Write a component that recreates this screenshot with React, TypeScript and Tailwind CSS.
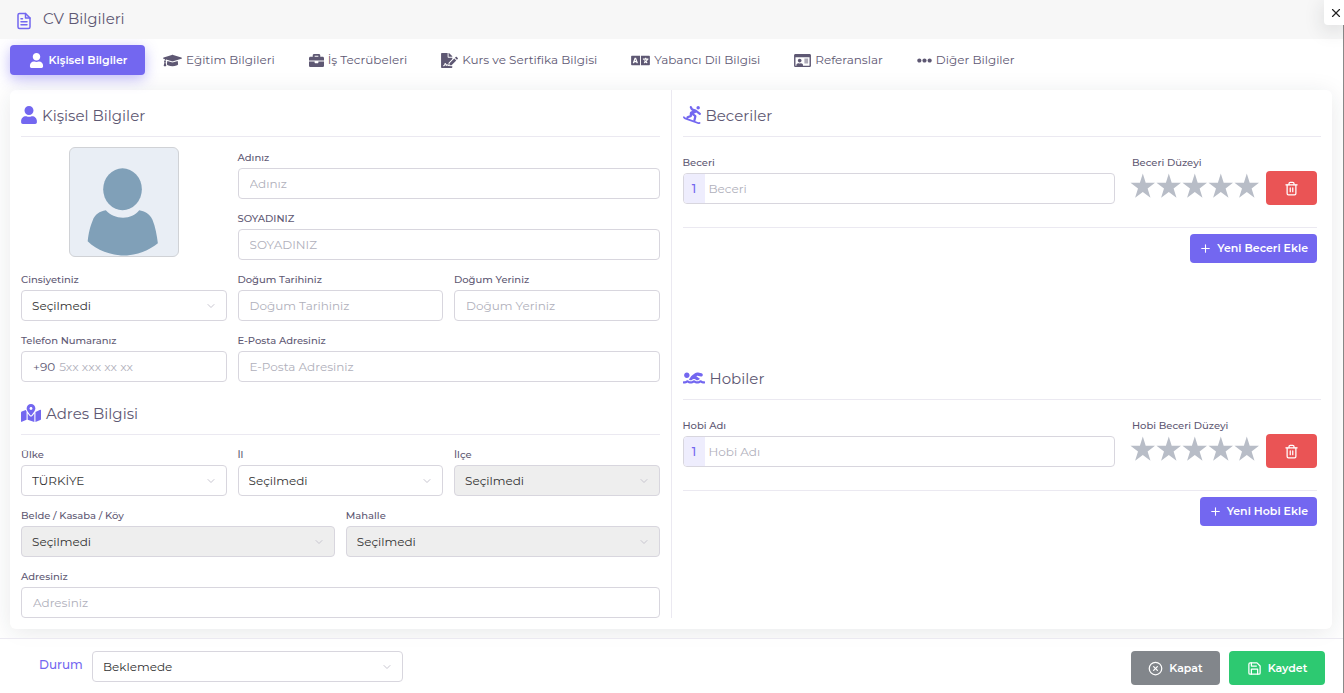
import { useId } from "react";
import type { ReactNode } from "react";
import {
  FaBriefcase,
  FaEllipsisH,
  FaFileSignature,
  FaGraduationCap,
  FaLanguage,
  FaMapMarkedAlt,
  FaRegIdCard,
  FaSnowboarding,
  FaSwimmer,
  FaUser,
} from "react-icons/fa";
import { FiChevronDown, FiFileText, FiPlus, FiSave, FiTrash2, FiX, FiXCircle } from "react-icons/fi";

const control =
  "h-[31px] w-full rounded-[4px] border border-[#d8d6de] bg-white text-xs outline-none";

function Label({ id, children }: { id: string; children: ReactNode }) {
  return (
    <label htmlFor={id} className="block h-5 text-[10px] leading-5 font-medium text-[#5e5873]">
      {children}
    </label>
  );
}

function TextField({ label, className = "" }: { label: string; className?: string }) {
  const id = useId();
  return (
    <div className={className}>
      <Label id={id}>{label}</Label>
      <input
        id={id}
        type="text"
        placeholder={label}
        className={`${control} block px-[11px] text-[#6e6b7b] placeholder:text-[#b0b0bb]`}
      />
    </div>
  );
}

function Dropdown({ id, value, disabled = false }: { id: string; value: string; disabled?: boolean }) {
  return (
    <div className="relative w-full">
      <select
        id={id}
        disabled={disabled}
        className={`${control} block appearance-none px-[10px] pt-px text-[#333333] disabled:bg-[#eeeeee] disabled:opacity-100`}
      >
        <option>{value}</option>
      </select>
      <FiChevronDown className="pointer-events-none absolute top-[10px] right-[10px] size-3 text-[#c8c6d0]" />
    </div>
  );
}

function SelectField({
  label,
  value,
  disabled,
  className = "",
}: {
  label: string;
  value: string;
  disabled?: boolean;
  className?: string;
}) {
  const id = useId();
  return (
    <div className={className}>
      <Label id={id}>{label}</Label>
      <Dropdown id={id} value={value} disabled={disabled} />
    </div>
  );
}

function Heading({ icon, children }: { icon: ReactNode; children: ReactNode }) {
  return (
    <h2 className="flex h-[47px] items-center gap-[5px] border-b border-[#ebe9f1] pt-[6px] text-[15px] text-[#5e5873]">
      <span className="-mt-[3px] text-[#7367f0]">{icon}</span>
      {children}
    </h2>
  );
}

const tabs = [
  { label: "Eğitim Bilgileri", icon: <FaGraduationCap className="h-[15px] w-[19px]" /> },
  { label: "İş Tecrübeleri", icon: <FaBriefcase className="size-[15px]" /> },
  { label: "Kurs ve Sertifika Bilgisi", icon: <FaFileSignature className="h-[15px] w-[17px]" /> },
  { label: "Yabancı Dil Bilgisi", icon: <FaLanguage className="h-[15px] w-[19px]" /> },
  { label: "Referanslar", icon: <FaRegIdCard className="h-[15px] w-[17px]" /> },
  { label: "Diğer Bilgiler", icon: <FaEllipsisH className="size-[15px]" /> },
];

function Avatar() {
  return (
    <svg
      viewBox="0 0 110 110"
      role="img"
      aria-label="Profil fotoğrafı"
      className="size-[110px] rounded-[6px] border border-[#d0d2d6] bg-[#e9eef5]"
    >
      <ellipse cx="53.5" cy="42" rx="19.7" ry="21.3" fill="#80a0b8" />
      <path
        d="M36.5 63.5C41 68.300 47 71 54 71S66.500 68.300 70.500 63.500C76 64.500 81 67 84 73C87 80 88.500 89 89.500 97C81 104 68 109.500 55 109.500S27 104 18 95C19 86 20.500 80 23 74C25.500 67.500 30 64.500 36.500 63.500Z"
        fill="#80a0b8"
      />
    </svg>
  );
}

function Stars({ label }: { label: string }) {
  return (
    <fieldset className="w-[127px]">
      <legend className="h-5 text-[10px] leading-5 font-medium text-[#5e5873]">{label}</legend>
      <div className="-ml-[2px] flex h-[26px] justify-between">
        {[1, 2, 3, 4, 5].map((n) => (
          <button key={n} type="button" aria-label={`${n} yıldız`} className="w-[25px]">
            <svg viewBox="0 0 25 26" className="h-[26px] w-[25px]">
              <path
                d="M12.800 0.500L15.700 9.800H25L17.600 15.400L20.500 24.700L12.800 19L5.100 24.700L8 15.400L0.500 9.800H9.900Z"
                fill="#b8bdc7"
              />
            </svg>
          </button>
        ))}
      </div>
    </fieldset>
  );
}

function SkillSection({
  icon,
  title,
  field,
  level,
  add,
}: {
  icon: ReactNode;
  title: string;
  field: string;
  level: string;
  add: string;
}) {
  const id = useId();
  return (
    <section className="min-h-[263px]">
      <Heading icon={icon}>{title}</Heading>
      <div className="mr-1 flex items-start border-b border-[#ebe9f1] pt-4 pb-[22px]">
        <div className="flex-1">
          <Label id={id}>{field}</Label>
          <div className="flex h-[31px] overflow-hidden rounded-[4px] border border-[#d8d6de]">
            <span className="flex w-[21px] items-center justify-center bg-[#eeedfd] text-xs font-medium text-[#7367f0]">
              1
            </span>
            <input
              id={id}
              type="text"
              placeholder={field}
              className="min-w-0 flex-1 px-1 text-xs text-[#6e6b7b] outline-none placeholder:text-[#b0b0bb]"
            />
          </div>
        </div>
        <div className="mr-[7px] ml-[17px]">
          <Stars label={level} />
        </div>
        <button
          type="button"
          aria-label="Sil"
          className="mt-[18px] flex h-[34px] w-[51px] items-center justify-center rounded-[4px] bg-[#ea5455] text-white"
        >
          <FiTrash2 className="size-[15px]" />
        </button>
      </div>
      <div className="mt-[6px] mr-1 flex justify-end">
        <button
          type="button"
          className="flex h-[29px] items-center gap-[5px] rounded-[4px] bg-[#7367f0] px-[9px] text-[11px] font-semibold text-white"
        >
          <FiPlus className="size-[13px]" />
          {add}
        </button>
      </div>
    </section>
  );
}

export default function App() {
  return (
    <div className="flex min-h-screen flex-col border-r border-[#8a8a8a] bg-white font-['Montserrat','Inter',sans-serif] text-[#5e5873]">
      <header className="relative flex h-[39px] items-center gap-[10px] bg-[#f7f7f7] pl-[15px]">
        <FiFileText className="mt-[2px] size-[18px] text-[#7367f0]" />
        <h1 className="text-[15px]">CV Bilgileri</h1>
        <button
          type="button"
          aria-label="Pencereyi kapat"
          className="absolute top-0 -right-px flex h-[25px] w-5 items-center justify-end rounded-bl-[4px] bg-white pr-px text-[#222222] shadow-[0_5px_20px_rgba(34,41,47,0.15)]"
        >
          <FiX className="size-[14px]" />
        </button>
      </header>

      <main className="flex-1 px-[10px] pt-[6px] pb-[9px]">
        <nav className="mb-[15px] flex h-[30px] text-xs">
          <button
            type="button"
            aria-current="page"
            className="mr-px flex w-[135px] items-center justify-center gap-1 rounded-[4px] bg-[#7367f0] text-[11px] font-semibold text-white shadow-[0_4px_14px_rgba(115,103,240,0.45)]"
          >
            <FaUser className="h-[15px] w-[17px]" />
            Kişisel Bilgiler
          </button>
          {tabs.map((tab) => (
            <button
              key={tab.label}
              type="button"
              className="flex items-center gap-1 px-[17px] whitespace-nowrap text-[#5e5873]"
            >
              {tab.icon}
              {tab.label}
            </button>
          ))}
        </nav>

        <div className="mr-px flex rounded-[6px] bg-white pb-[11px] shadow-[0_4px_24px_rgba(34,41,47,0.1)]">
          <div className="flex-1 border-r border-[#ebe9f1] px-[11px]">
            <Heading icon={<FaUser className="h-[18px] w-4" />}>Kişisel Bilgiler</Heading>
            <div className="mt-[11px] grid grid-cols-3 gap-x-[11px] gap-y-[10px]">
              <div className="row-span-2 -mt-px flex justify-center">
                <Avatar />
              </div>
              <TextField label="Adınız" className="col-span-2" />
              <TextField label="SOYADINIZ" className="col-span-2" />
              <SelectField label="Cinsiyetiniz" value="Seçilmedi" />
              <TextField label="Doğum Tarihiniz" />
              <TextField label="Doğum Yeriniz" />
              <div>
                <Label id="phone">Telefon Numaranız</Label>
                <div className={`${control} flex items-center px-[11px]`}>
                  <span className="text-[#5e5873]">+90</span>
                  <input
                    id="phone"
                    type="tel"
                    placeholder="5xx xxx xx xx"
                    className="ml-1 min-w-0 flex-1 outline-none placeholder:text-[#b0b0bb]"
                  />
                </div>
              </div>
              <TextField label="E-Posta Adresiniz" className="col-span-2" />
            </div>

            <div className="mt-[6px]">
              <Heading icon={<FaMapMarkedAlt className="h-[18px] w-5" />}>Adres Bilgisi</Heading>
            </div>
            <div className="mt-[10px] grid grid-cols-6 gap-x-[11px] gap-y-[10px]">
              <SelectField label="Ülke" value="TÜRKİYE" className="col-span-2" />
              <SelectField label="İl" value="Seçilmedi" className="col-span-2" />
              <SelectField label="İlçe" value="Seçilmedi" disabled className="col-span-2" />
              <SelectField label="Belde / Kasaba / Köy" value="Seçilmedi" disabled className="col-span-3" />
              <SelectField label="Mahalle" value="Seçilmedi" disabled className="col-span-3" />
              <TextField label="Adresiniz" className="col-span-6" />
            </div>
          </div>

          <div className="flex-1 px-[11px]">
            <SkillSection
              icon={<FaSnowboarding className="size-[18px]" />}
              title="Beceriler"
              field="Beceri"
              level="Beceri Düzeyi"
              add="Yeni Beceri Ekle"
            />
            <SkillSection
              icon={<FaSwimmer className="h-[18px] w-[22px]" />}
              title="Hobiler"
              field="Hobi Adı"
              level="Hobi Beceri Düzeyi"
              add="Yeni Hobi Ekle"
            />
          </div>
        </div>
      </main>

      <footer className="relative flex h-[55px] items-start justify-between border-t border-[#ebe9f1] bg-white/80 pt-3 pr-[18px] pl-[39px]">
        <div className="flex items-center">
          <label htmlFor="status" className="w-[53px] pb-1 text-xs font-medium text-[#7367f0]">
            Durum
          </label>
          <div className="w-[311px]">
            <Dropdown id="status" value="Beklemede" />
          </div>
        </div>
        <div className="flex gap-[9px] text-[11px] font-semibold text-white">
          <button
            type="button"
            className="flex h-[34px] w-[89px] items-center justify-center gap-[6px] rounded-[4px] bg-[#82868b]"
          >
            <FiXCircle className="size-[15px]" />
            Kapat
          </button>
          <button
            type="button"
            className="flex h-[34px] w-24 items-center justify-center gap-[6px] rounded-[4px] bg-[#2dc971]"
          >
            <FiSave className="size-[15px]" />
            Kaydet
          </button>
        </div>
      </footer>
    </div>
  );
}
